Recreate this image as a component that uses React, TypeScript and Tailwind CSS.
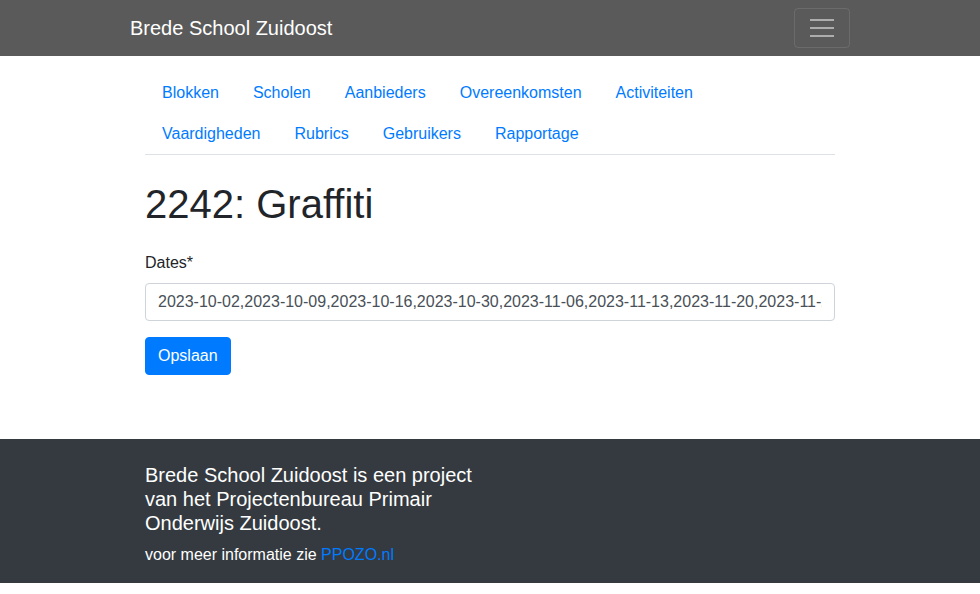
import React from 'react';

const navRows = [
  ['Blokken', 'Scholen', 'Aanbieders', 'Overeenkomsten', 'Activiteiten'],
  ['Vaardigheden', 'Rubrics', 'Gebruikers', 'Rapportage'],
];

const dates =
  '2023-10-02,2023-10-09,2023-10-16,2023-10-30,2023-11-06,2023-11-13,2023-11-20,2023-11-27,2023-12-04,2023-12-11,2024-01-08,2024-01-15';

const App = () => {
  return (
    <div className="min-h-[594px] bg-white text-[#212529] font-['Liberation_Sans',Arial,sans-serif] text-base">
      {/* Navbar */}
      <header className="h-14 bg-[#5a5a5a]">
        <div className="w-[720px] mx-auto h-full flex items-center justify-between">
          <a href="#" className="text-white text-xl leading-[30px]">
            Brede School Zuidoost
          </a>
          <button
            className="w-14 h-10 flex items-center justify-center border border-white/10 rounded"
            aria-label="Toggle navigation"
          >
            <svg width="30" height="30" viewBox="0 0 30 30">
              <path
                d="M3 7h24M3 15h24M3 23h24"
                stroke="rgba(255,255,255,0.5)"
                strokeWidth="2"
              />
            </svg>
          </button>
        </div>
      </header>

      <main className="w-[690px] mx-auto">
        {/* Tabs */}
        <nav className="mt-4 border-b border-[#dee2e6]">
          {navRows.map((row, i) => (
            <div key={i} className="flex">
              {row.map((item) => (
                <a
                  key={item}
                  href="#"
                  className="px-[17px] pt-[9px] pb-2 leading-6 text-[#007bff]"
                >
                  {item}
                </a>
              ))}
            </div>
          ))}
        </nav>

        <h1 className="mt-[25px] text-[40px] leading-[48px] font-normal">2242: Graffiti</h1>

        <form className="mt-[23px]" onSubmit={(e) => e.preventDefault()}>
          <label className="block leading-6 mb-2">Dates*</label>
          <input
            readOnly
            value={dates}
            className="block w-full h-[38px] px-3 border border-[#ced4da] rounded text-[#495057] leading-6 outline-none"
          />
          <button
            type="submit"
            className="mt-4 h-[38px] px-3 bg-[#007bff] border border-[#007bff] text-white rounded leading-6"
          >
            Opslaan
          </button>
        </form>
      </main>

      {/* Footer */}
      <footer className="mt-16 bg-[#343a40] text-white pt-6 pb-4">
        <div className="w-[690px] mx-auto">
          <h5 className="w-[330px] text-xl leading-6 mb-2 font-normal">
            Brede School Zuidoost is een project van het Projectenbureau Primair Onderwijs Zuidoost.
          </h5>
          <p className="leading-6">
            voor meer informatie zie{' '}
            <a href="#" className="text-[#007bff]">
              PPOZO.nl
            </a>
          </p>
        </div>
      </footer>
    </div>
  );
};

export default App;
